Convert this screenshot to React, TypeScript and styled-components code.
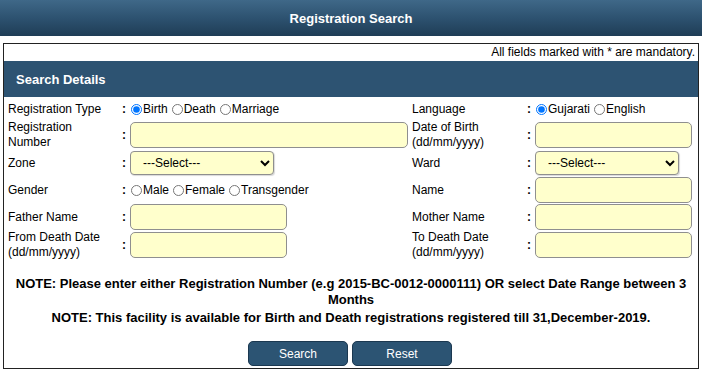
import React from "react";
import styled, { createGlobalStyle } from "styled-components";

const GlobalStyle = createGlobalStyle`
  html, body {
    margin: 0;
    padding: 0;
    background: #fff;
    font-family: "Liberation Sans", Arial, sans-serif;
    font-size: 12px;
    color: #000;
  }
`;

const Header = styled.div`
  height: 36px;
  background: linear-gradient(to bottom, #3f6888 0%, #2d5270 50%, #1f3d56 100%);
  color: #fff;
  font-weight: bold;
  font-size: 13px;
  display: flex;
  align-items: center;
  justify-content: center;
`;

const Panel = styled.div`
  margin: 7px 3px 0 3px;
  border: 1px solid #222;
  height: 326px;
  box-sizing: border-box;
`;

const Mandatory = styled.div`
  text-align: right;
  padding: 1px 3px 0 0;
  height: 16px;
  line-height: 14px;
`;

const SectionBar = styled.div`
  height: 36px;
  background: #2d5372;
  color: #fff;
  font-weight: bold;
  font-size: 13px;
  display: flex;
  align-items: center;
  padding-left: 12px;
`;

const FormGrid = styled.div`
  display: grid;
  grid-template-columns: 110px 12px 282px 113px 10px 1fr;
  grid-template-rows: 24px 28px 28px 26px 28px 28px;
  padding-left: 4px;
  margin-top: 0px;
`;

const Label = styled.div`
  display: flex;
  align-items: center;
  line-height: 15px;
`;

const Colon = styled.div<{ $pad?: number }>`
  display: flex;
  align-items: center;
  padding-left: ${(p) => p.$pad ?? 4}px;
  font-weight: bold;
`;

const Field = styled.div`
  display: flex;
  align-items: center;
`;

const TextBox = styled.input<{ $w: number }>`
  width: ${(p) => p.$w}px;
  height: 26px;
  box-sizing: border-box;
  background: #ffffcc;
  border: 1px solid #8f8f8f;
  border-radius: 5px;
  outline: none;
  font-family: inherit;
`;

const Select = styled.select`
  width: 144px;
  height: 24px;
  box-sizing: border-box;
  background: #ffffcc;
  border: 1px solid #8f8f8f;
  border-radius: 4px;
  box-shadow: 1px 1px 1px rgba(0, 0, 0, 0.15);
  font-family: inherit;
  font-size: 12px;
  padding-left: 8px;
  color: #000;
`;

const RadioLabel = styled.label`
  display: inline-flex;
  align-items: center;
  margin-right: 3px;
`;

const Radio = styled.input`
  margin: 0 1px 0 1px;
  width: 11px;
  height: 11px;
`;

const Notes = styled.div`
  text-align: center;
  font-weight: bold;
  font-size: 13px;
  padding: 17px 10px 0 10px;
  line-height: 16px;
`;

const NoteLine = styled.div<{ $gap?: number }>`
  margin-top: ${(p) => p.$gap ?? 0}px;
`;

const Buttons = styled.div`
  display: flex;
  justify-content: center;
  gap: 4px;
  margin-top: 15px;
  padding-right: 2px;
`;

const Button = styled.button`
  width: 100px;
  height: 25px;
  background: #2c5473;
  border: 1px solid #1b3850;
  border-radius: 5px;
  color: #fff;
  font-family: inherit;
  font-size: 12px;
`;

function RadioGroup({ name, options, checked }: { name: string; options: string[]; checked?: string }) {
  return (
    <Field>
      {options.map((o) => (
        <RadioLabel key={o}>
          <Radio type="radio" name={name} defaultChecked={o === checked} />
          {o}
        </RadioLabel>
      ))}
    </Field>
  );
}

export default function App() {
  return (
    <>
      <GlobalStyle />
      <Header>Registration Search</Header>
      <Panel>
        <Mandatory>All fields marked with * are mandatory.</Mandatory>
        <SectionBar>Search Details</SectionBar>
        <FormGrid>
          <Label>Registration Type</Label>
          <Colon>:</Colon>
          <RadioGroup name="rtype" options={["Birth", "Death", "Marriage"]} checked="Birth" />
          <Label>Language</Label>
          <Colon $pad={2}>:</Colon>
          <RadioGroup name="lang" options={["Gujarati", "English"]} checked="Gujarati" />

          <Label>
            Registration
            <br />
            Number
          </Label>
          <Colon>:</Colon>
          <Field>
            <TextBox $w={278} />
          </Field>
          <Label>
            Date of Birth
            <br />
            (dd/mm/yyyy)
          </Label>
          <Colon $pad={2}>:</Colon>
          <Field>
            <TextBox $w={157} />
          </Field>

          <Label>Zone</Label>
          <Colon>:</Colon>
          <Field>
            <Select>
              <option>---Select---</option>
            </Select>
          </Field>
          <Label>Ward</Label>
          <Colon $pad={2}>:</Colon>
          <Field>
            <Select>
              <option>---Select---</option>
            </Select>
          </Field>

          <Label>Gender</Label>
          <Colon>:</Colon>
          <RadioGroup name="gender" options={["Male", "Female", "Transgender"]} />
          <Label>Name</Label>
          <Colon $pad={2}>:</Colon>
          <Field>
            <TextBox $w={157} />
          </Field>

          <Label>Father Name</Label>
          <Colon>:</Colon>
          <Field>
            <TextBox $w={157} />
          </Field>
          <Label>Mother Name</Label>
          <Colon $pad={2}>:</Colon>
          <Field>
            <TextBox $w={157} />
          </Field>

          <Label>
            From Death Date
            <br />
            (dd/mm/yyyy)
          </Label>
          <Colon>:</Colon>
          <Field>
            <TextBox $w={157} />
          </Field>
          <Label>
            To Death Date
            <br />
            (dd/mm/yyyy)
          </Label>
          <Colon $pad={2}>:</Colon>
          <Field>
            <TextBox $w={157} />
          </Field>
        </FormGrid>
        <Notes>
          <NoteLine>
            NOTE: Please enter either Registration Number (e.g 2015-BC-0012-0000111) OR select Date Range between 3
            Months
          </NoteLine>
          <NoteLine $gap={2}>
            NOTE: This facility is available for Birth and Death registrations registered till 31,December-2019.
          </NoteLine>
        </Notes>
        <Buttons>
          <Button>Search</Button>
          <Button>Reset</Button>
        </Buttons>
      </Panel>
    </>
  );
}
